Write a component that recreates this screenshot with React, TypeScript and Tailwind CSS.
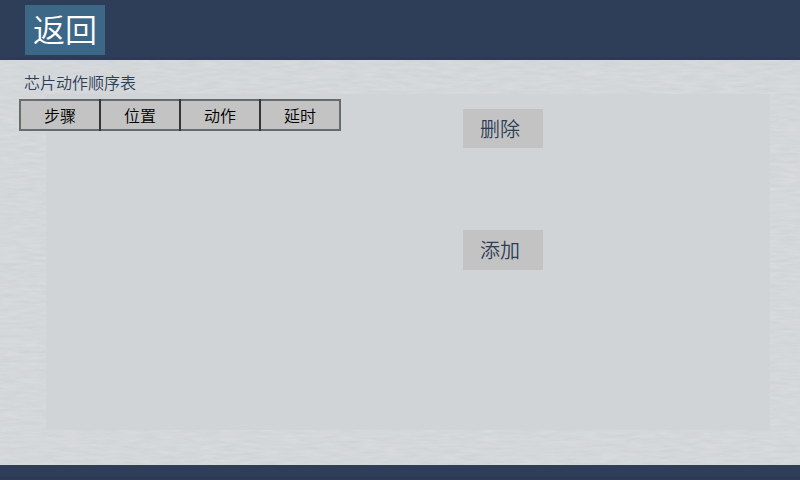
const columns = ['步骤', '位置', '动作', '延时'];

function BrushedTexture() {
  return (
    <svg className="col-start-1 row-start-1 h-full w-full" aria-hidden="true">
      <filter id="brushed" x="0" y="0" width="100%" height="100%" colorInterpolationFilters="sRGB">
        <feTurbulence type="fractalNoise" baseFrequency="0.05 0.32" numOctaves={4} seed={7} />
        <feColorMatrix
          values="0.05 0.02 0 0 0.797
                  0.05 0 0 0 0.82
                  0.042 0 0 0 0.832
                  0 0 0 0 1"
        />
      </filter>
      <rect width="100%" height="100%" filter="url(#brushed)" />
    </svg>
  );
}

function ActionButton({ label, className }: { label: string; className: string }) {
  return (
    <button
      className={`flex w-20 items-center justify-center bg-[#c3c3c3] pr-1.5 text-[20px] leading-none text-[#2e3e58] ${className}`}
    >
      {label}
    </button>
  );
}

export default function App() {
  return (
    <div className="flex h-[480px] w-[800px] flex-col overflow-hidden font-['Noto_Sans_CJK_SC',sans-serif] font-[350]">
      <header className="flex h-[60px] shrink-0 items-start border-b-[3px] border-[#2d3a56] bg-[#2e3e58] pt-[5px] pl-[25px]">
        <button className="flex h-[50px] w-20 items-center justify-center bg-[#3d6787] pb-1 text-[32px] leading-none text-white">
          返回
        </button>
      </header>

      <main className="grid h-[405px] shrink-0 grid-cols-[800px] grid-rows-[405px]">
        <BrushedTexture />
        <div className="z-10 col-start-1 row-start-1 mt-[34px] ml-[46px] h-[336px] w-[724px] bg-[#d0d4d7]" />
        <div className="z-20 col-start-1 row-start-1 flex">
          <section className="w-[463px]">
            <h1 className="mt-[10px] ml-6 h-[29px] text-[16px] leading-6 font-[350] text-[#2e3e58]">芯片动作顺序表</h1>
            <div className="ml-[19px] flex">
              {columns.map((name) => (
                <div
                  key={name}
                  className="-mr-0.5 flex h-8 w-[82px] items-center justify-center border-2 border-black/50 bg-[#c3c3c3] bg-clip-padding text-[16px] leading-none text-black"
                >
                  {name}
                </div>
              ))}
            </div>
          </section>
          <aside className="flex flex-col pt-[49px]">
            <ActionButton label="删除" className="h-[39px]" />
            <ActionButton label="添加" className="mt-[82px] h-10" />
          </aside>
        </div>
      </main>

      <footer className="h-[15px] shrink-0 border-b-[3px] border-[#2d3a56] bg-[#2e3e58]" />
    </div>
  );
}
